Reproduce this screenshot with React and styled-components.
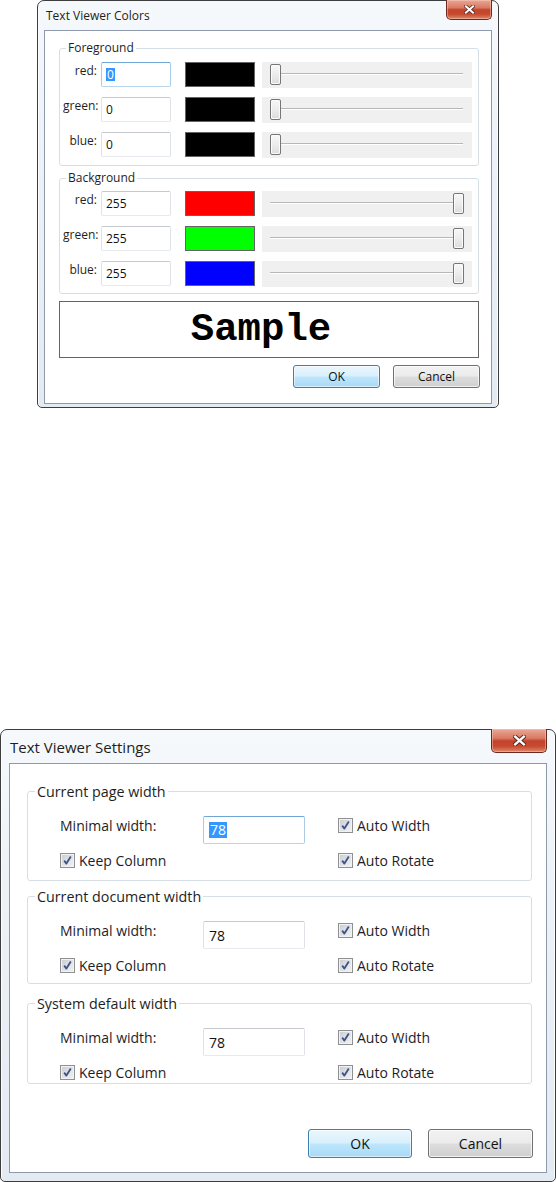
import React from 'react';
import styled, { createGlobalStyle } from 'styled-components';

const GlobalStyle = createGlobalStyle`
  html, body {
    margin: 0;
    padding: 0;
    background: #fff;
  }
  body {
    font-family: "Open Sans", "Noto Sans", sans-serif;
    color: #1b1b1b;
  }
`;

const Page = styled.div`
  width: 556px;
  display: flex;
  flex-direction: column;
  align-items: flex-start;
`;

// Window chrome
const Window = styled.div`
  box-sizing: border-box;
  width: ${p => p.$w}px;
  height: ${p => p.$h}px;
  margin: ${p => p.$mt}px 0 0 ${p => p.$ml}px;
  padding: 0 ${p => p.$side}px ${p => p.$pb}px;
  border: 1px solid #3d3d3d;
  border-radius: 7px 7px 5px 5px;
  background: linear-gradient(180deg, #f6f9fc 0%, #edf2f8 35%, #e4eaf2 100%);
  box-shadow: inset 1px 0 0 #fbfdff, inset -1px 0 0 #fbfdff;
  display: flex;
  flex-direction: column;
`;

const TitleBar = styled.div`
  height: ${p => p.$h}px;
  flex: none;
  display: flex;
  align-items: center;
  justify-content: space-between;
`;

const Title = styled.span`
  margin-left: ${p => p.$ml}px;
  font-size: ${p => p.$size}px;
  color: #1e1e1e;
  white-space: nowrap;
`;

const CloseButton = styled.div`
  align-self: flex-start;
  margin-top: -1px;
  box-sizing: border-box;
  width: ${p => p.$w}px;
  height: ${p => p.$h}px;
  border: 1px solid #6b2a20;
  border-top: none;
  border-radius: 0 0 5px 5px;
  background: linear-gradient(180deg, #e9a897 0%, #d97a63 40%, #c4432a 52%, #c74a30 75%, #dc8a6c 100%);
  box-shadow: inset 0 0 0 1px rgba(255, 210, 195, 0.45);
  display: flex;
  align-items: center;
  justify-content: center;
`;

const Client = styled.div`
  flex: 1;
  background: #fff;
  border: 1px solid #8e9aab;
  display: flex;
  flex-direction: column;
`;

// Group boxes
const Group = styled.fieldset`
  margin: ${p => p.$mt}px ${p => p.$mr}px 0 ${p => p.$ml}px;
  padding: 0;
  border: 1px solid #d5dfe5;
  border-radius: 3px;
  min-width: 0;
`;

const Legend = styled.legend`
  margin-left: ${p => p.$ml}px;
  padding: 0 2px;
  font-size: ${p => p.$size}px;
  line-height: ${p => p.$lh}px;
  color: #1e1e1e;
`;

// Colors dialog
const ColorBody = styled.div`
  padding: ${p => p.$pt}px 6px ${p => p.$pb}px 3px;
  display: flex;
  flex-direction: column;
  gap: 9px;
`;

const ColorRow = styled.div`
  display: flex;
  align-items: flex-start;
  height: 26px;
`;

const ChannelLabel = styled.span`
  width: 34px;
  margin-right: 4px;
  padding-top: 1px;
  text-align: right;
  font-size: 12px;
  line-height: 16px;
  color: #1e1e1e;
`;

const TextBox = styled.div`
  box-sizing: border-box;
  width: ${p => p.$w}px;
  height: ${p => p.$h}px;
  padding-left: ${p => p.$pl}px;
  border: 1px solid;
  border-color: ${p => (p.$focus ? '#6fa6d6 #a9cbe8 #b9d5ec #a9cbe8' : '#c6c9d0 #dfe2e8 #e6e9ee #dfe2e8')};
  border-radius: 2px;
  background: #fff;
  font-size: ${p => p.$size}px;
  color: #111;
  display: flex;
  align-items: center;
`;

const Selected = styled.span`
  background: #3399ff;
  color: #fff;
  padding: 0 1px;
  line-height: 1.15;
`;

const Swatch = styled.div`
  box-sizing: border-box;
  width: 70px;
  height: 25px;
  margin-left: 14px;
  border: 1px solid #646464;
  background: ${p => p.$color};
`;

const SliderTrack = styled.div`
  position: relative;
  width: 210px;
  height: 26px;
  margin-left: 7px;
  background: #f0f0f0;

  &::before {
    content: '';
    position: absolute;
    left: 8px;
    right: 9px;
    top: 11px;
    height: 1px;
    background: #b7b7b7;
    box-shadow: 0 1px 0 #ffffff;
  }
`;

const SliderThumb = styled.div`
  position: absolute;
  top: 2px;
  box-sizing: border-box;
  width: 11px;
  height: 21px;
  border: 1px solid #767676;
  border-radius: 2px;
  background: linear-gradient(180deg, #f7f7f7 0%, #ececec 50%, #dcdcdc 100%);
  box-shadow: inset 0 0 0 1px #fbfbfb;
`;

const SampleBox = styled.div`
  box-sizing: border-box;
  height: 57px;
  margin: 7px 12px 0 14px;
  padding-right: 16px;
  border: 1px solid #646464;
  background: #fff;
  display: flex;
  align-items: center;
  justify-content: center;
  font-family: "Liberation Mono", "DejaVu Sans Mono", monospace;
  font-weight: bold;
  font-size: 39px;
  color: #000;
`;

// Buttons
const ButtonRow = styled.div`
  margin: ${p => p.$mt}px ${p => p.$mr}px 0 0;
  display: flex;
  justify-content: flex-end;
  gap: ${p => p.$gap}px;
`;

const Button = styled.div`
  box-sizing: border-box;
  width: ${p => p.$w}px;
  height: ${p => p.$h}px;
  border: 1px solid ${p => (p.$primary ? '#3c7fb1' : '#707070')};
  border-radius: 3px;
  background: ${p =>
    p.$primary
      ? 'linear-gradient(180deg, #eaf6fd 0%, #d9f0fc 48%, #bee6fd 52%, #a7d9f5 100%)'
      : 'linear-gradient(180deg, #f2f2f2 0%, #ebebeb 48%, #dddddd 52%, #cfcfcf 100%)'};
  box-shadow: inset 0 0 0 1px ${p => (p.$primary ? 'rgba(255,255,255,0.55)' : 'rgba(255,255,255,0.7)')};
  font-size: ${p => p.$size}px;
  color: #111;
  display: flex;
  align-items: center;
  justify-content: center;
`;

// Settings dialog
const SettingsBody = styled.div`
  padding: 15px 0 ${p => p.$pb}px 32px;
  display: grid;
  grid-template-columns: 143px 102px auto;
  grid-template-rows: 28px 19px;
  row-gap: 7px;
  align-items: start;
`;

const FieldLabel = styled.span`
  font-size: 14px;
  line-height: 19px;
  color: #1d1d28;
`;

const CheckItem = styled.label`
  grid-column: ${p => p.$col};
  margin-left: ${p => (p.$col === 3 ? 33 : 0)}px;
  display: flex;
  align-items: center;
  gap: 4px;
  height: 19px;
  font-size: 14px;
  color: #1d1d28;
  white-space: nowrap;
`;

const CheckBox = styled.span`
  box-sizing: border-box;
  width: 15px;
  height: 15px;
  border: 1px solid #8f9091;
  background: linear-gradient(135deg, #c8cbd0 0%, #e2e3e5 55%, #f2f2f2 100%);
  box-shadow: inset 0 0 0 1px #f1f2f3;
  display: flex;
  align-items: center;
  justify-content: center;
`;

const CloseGlyph = ({ w, h }) => (
  <svg width={w} height={h} viewBox="0 0 12 10">
    <path d="M2 1.5 L10 8.5 M10 1.5 L2 8.5" stroke="#5a2a22" strokeWidth="4" strokeLinecap="square" fill="none" />
    <path d="M2 1.5 L10 8.5 M10 1.5 L2 8.5" stroke="#ffffff" strokeWidth="2.2" strokeLinecap="square" fill="none" />
  </svg>
);

const Check = () => (
  <svg width="11" height="11" viewBox="0 0 11 11">
    <path d="M2.2 5.6 L4.4 8.6 L8.8 1.6" stroke="#3e5389" strokeWidth="1.8" fill="none" strokeLinejoin="round" />
  </svg>
);

const foreground = [
  { name: 'red', value: 0, color: '#000000', focus: true },
  { name: 'green', value: 0, color: '#000000' },
  { name: 'blue', value: 0, color: '#000000' },
];

const background = [
  { name: 'red', value: 255, color: '#ff0000' },
  { name: 'green', value: 255, color: '#00ff00' },
  { name: 'blue', value: 255, color: '#0000ff' },
];

const ChannelRow = ({ ch }) => (
  <ColorRow>
    <ChannelLabel>{ch.name}:</ChannelLabel>
    <TextBox $w={70} $h={25} $pl={4} $size={12} $focus={ch.focus}>
      {ch.focus ? <Selected>{ch.value}</Selected> : ch.value}
    </TextBox>
    <Swatch $color={ch.color} />
    <SliderTrack>
      <SliderThumb style={{ left: 8 + Math.round((ch.value / 255) * 183) }} />
    </SliderTrack>
  </ColorRow>
);

const ColorsDialog = () => (
  <Window $w={462} $h={408} $ml={37} $mt={0} $side={6} $pb={3}>
    <TitleBar $h={29}>
      <Title $ml={2} $size={12}>Text Viewer Colors</Title>
      <CloseButton $w={46} $h={20}>
        <CloseGlyph w={11} h={9} />
      </CloseButton>
    </TitleBar>
    <Client>
      <Group $mt={9} $ml={14} $mr={12}>
        <Legend $ml={6} $size={12} $lh={16}>Foreground</Legend>
        <ColorBody $pt={6} $pb={7}>
          {foreground.map(ch => <ChannelRow key={ch.name} ch={ch} />)}
        </ColorBody>
      </Group>
      <Group $mt={4} $ml={14} $mr={12}>
        <Legend $ml={6} $size={12} $lh={16}>Background</Legend>
        <ColorBody $pt={5} $pb={6}>
          {background.map(ch => <ChannelRow key={ch.name} ch={ch} />)}
        </ColorBody>
      </Group>
      <SampleBox>Sample</SampleBox>
      <ButtonRow $mt={7} $mr={11} $gap={13}>
        <Button $primary $w={87} $h={23} $size={12}>OK</Button>
        <Button $w={87} $h={23} $size={12}>Cancel</Button>
      </ButtonRow>
    </Client>
  </Window>
);

const sections = [
  { title: 'Current page width', mt: 18, pb: 10, focus: true },
  { title: 'Current document width', mt: 6, pb: 8 },
  { title: 'System default width', mt: 10, pb: 1 },
];

const SettingsDialog = () => (
  <Window $w={556} $h={453} $ml={0} $mt={321} $side={8} $pb={8}>
    <TitleBar $h={33}>
      <Title $ml={1} $size={15}>Text Viewer Settings</Title>
      <CloseButton $w={56} $h={24}>
        <CloseGlyph w={13} h={11} />
      </CloseButton>
    </TitleBar>
    <Client>
      {sections.map(s => (
        <Group key={s.title} $mt={s.mt} $ml={17} $mr={14}>
          <Legend $ml={7} $size={14.3} $lh={19}>{s.title}</Legend>
          <SettingsBody $pb={s.pb}>
            <FieldLabel>Minimal width:</FieldLabel>
            <TextBox $w={102} $h={28} $pl={5} $size={14} $focus={s.focus}>
              {s.focus ? <Selected>78</Selected> : '78'}
            </TextBox>
            <CheckItem $col={3}>
              <CheckBox><Check /></CheckBox>
              Auto Width
            </CheckItem>
            <CheckItem $col={1}>
              <CheckBox><Check /></CheckBox>
              Keep Column
            </CheckItem>
            <CheckItem $col={3}>
              <CheckBox><Check /></CheckBox>
              Auto Rotate
            </CheckItem>
          </SettingsBody>
        </Group>
      ))}
      <ButtonRow $mt={45} $mr={13} $gap={16}>
        <Button $primary $w={104} $h={29} $size={14}>OK</Button>
        <Button $w={105} $h={29} $size={14}>Cancel</Button>
      </ButtonRow>
    </Client>
  </Window>
);

export default function App() {
  return (
    <Page>
      <GlobalStyle />
      <ColorsDialog />
      <SettingsDialog />
    </Page>
  );
}
